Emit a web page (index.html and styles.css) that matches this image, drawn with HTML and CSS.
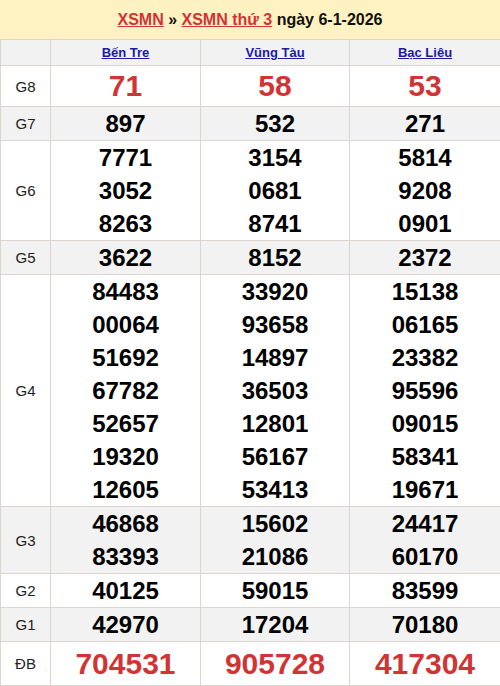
FILE: index.html
```html
<!DOCTYPE html>
<html lang="vi">
<head>
<meta charset="utf-8">
<title>XSMN thứ 3 ngày 6-1-2026</title>
<link rel="stylesheet" href="styles.css">
</head>
<body>
<div class="page">
  <h2 class="title"><a href="#">XSMN</a> » <a href="#">XSMN thứ 3</a> ngày 6-1-2026</h2>
  <table class="kq">
    <colgroup><col class="c0"><col class="c1"><col class="c2"><col class="c3"></colgroup>
    <thead>
      <tr class="head"><th></th><th><a href="#">Bến Tre</a></th><th><a href="#">Vũng Tàu</a></th><th><a href="#">Bạc Liêu</a></th></tr>
    </thead>
    <tbody>
      <tr class="g8"><td class="lb">G8</td><td><div>71</div></td><td><div>58</div></td><td><div>53</div></td></tr>
      <tr class="alt"><td class="lb">G7</td><td><div>897</div></td><td><div>532</div></td><td><div>271</div></td></tr>
      <tr><td class="lb">G6</td><td><div>7771</div><div>3052</div><div>8263</div></td><td><div>3154</div><div>0681</div><div>8741</div></td><td><div>5814</div><div>9208</div><div>0901</div></td></tr>
      <tr class="alt"><td class="lb">G5</td><td><div>3622</div></td><td><div>8152</div></td><td><div>2372</div></td></tr>
      <tr><td class="lb">G4</td>
        <td><div>84483</div><div>00064</div><div>51692</div><div>67782</div><div>52657</div><div>19320</div><div>12605</div></td>
        <td><div>33920</div><div>93658</div><div>14897</div><div>36503</div><div>12801</div><div>56167</div><div>53413</div></td>
        <td><div>15138</div><div>06165</div><div>23382</div><div>95596</div><div>09015</div><div>58341</div><div>19671</div></td></tr>
      <tr class="alt"><td class="lb">G3</td><td><div>46868</div><div>83393</div></td><td><div>15602</div><div>21086</div></td><td><div>24417</div><div>60170</div></td></tr>
      <tr><td class="lb">G2</td><td><div>40125</div></td><td><div>59015</div></td><td><div>83599</div></td></tr>
      <tr class="alt"><td class="lb">G1</td><td><div>42970</div></td><td><div>17204</div></td><td><div>70180</div></td></tr>
      <tr class="db"><td class="lb">ĐB</td><td><div>704531</div></td><td><div>905728</div></td><td><div>417304</div></td></tr>
    </tbody>
  </table>
</div>
</body>
</html>
```
FILE: styles.css
```css
* { box-sizing: border-box; }
html, body { margin: 0; padding: 0; background: #fff; }
body { font-family: "Liberation Sans", Arial, sans-serif; color: #000; }
.page { width: 500px; }
.title {
  margin: 0;
  height: 39px;
  background: #fff2c2;
  font-size: 16px;
  font-weight: bold;
  text-align: center;
  line-height: 39px;
  color: #111;
}
.title a { color: #d03434; text-decoration: underline; }
.kq {
  width: 500px;
  border-collapse: collapse;
  table-layout: fixed;
}
.c0 { width: 50px; }
.c1 { width: 150px; }
.c2 { width: 149px; }
.c3 { width: 151px; }
.kq th, .kq td {
  border: 1px solid #ddd5cc;
  padding: 0;
  text-align: center;
  vertical-align: middle;
}
.head th {
  background: #f2f2f2;
  height: 26px;
  font-size: 13px;
  font-weight: bold;
  line-height: 25px;
}
.head a { color: #1a1aa6; text-decoration: underline; }
.kq td div {
  font-size: 24px;
  font-weight: bold;
  line-height: 33px;
  color: #000;
}
.kq td.lb {
  font-size: 15px;
  color: #222;
}
.alt td { background: #f2f2f2; }
.g8 td div {
  font-size: 30px;
  line-height: 40px;
  color: #d03434;
}
.db td div {
  font-size: 30px;
  line-height: 43px;
  color: #d03434;
}
```
